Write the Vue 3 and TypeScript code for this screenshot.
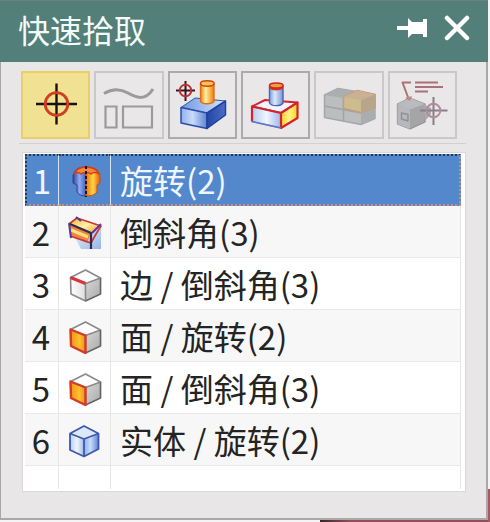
<script setup lang="ts">
import { ref } from 'vue'

type Kind = 'revolve' | 'chamfer' | 'edge' | 'face' | 'body'

interface Pick {
  id: number
  kind: Kind
  label: string
}

const picks: Pick[] = [
  { id: 1, kind: 'revolve', label: '旋转(2)' },
  { id: 2, kind: 'chamfer', label: '倒斜角(3)' },
  { id: 3, kind: 'edge', label: '边 / 倒斜角(3)' },
  { id: 4, kind: 'face', label: '面 / 旋转(2)' },
  { id: 5, kind: 'face', label: '面 / 倒斜角(3)' },
  { id: 6, kind: 'body', label: '实体 / 旋转(2)' },
]

const selected = ref(1)
</script>

<template>
  <div class="desktop">
    <main class="window">
      <header class="titlebar">
        <h1>快速拾取</h1>
        <button class="caption" type="button" aria-label="固定">
          <svg width="32" height="24" viewBox="0 0 32 24">
            <path d="M1 10h11V2l4 4h11V3h4v18h-4v-3H16l-4 4v-8H1z" fill="#fff" />
          </svg>
        </button>
        <button class="caption" type="button" aria-label="关闭">
          <svg width="26" height="26" viewBox="0 0 26 26">
            <path d="M3 3l20 20M23 3L3 23" fill="none" stroke="#fff" stroke-width="4.500" stroke-linecap="round" />
          </svg>
        </button>
      </header>

      <svg class="defs" width="0" height="0" aria-hidden="true">
        <defs>
          <linearGradient id="blueFront"><stop offset="0" stop-color="#8fb0ea" /><stop offset=".45" stop-color="#c9dcfa" /><stop offset="1" stop-color="#5d82d2" /></linearGradient>
          <linearGradient id="blueTop"><stop offset="0" stop-color="#6f97e2" /><stop offset="1" stop-color="#d5e5fc" /></linearGradient>
          <linearGradient id="blueSide"><stop offset="0" stop-color="#2447a4" /><stop offset="1" stop-color="#4a6cc6" /></linearGradient>
          <linearGradient id="orangeRod"><stop offset="0" stop-color="#ef7a12" /><stop offset=".38" stop-color="#fff3a0" /><stop offset="1" stop-color="#f07a08" /></linearGradient>
          <linearGradient id="blueRod"><stop offset="0" stop-color="#7e9fe0" /><stop offset=".4" stop-color="#dce8fb" /><stop offset="1" stop-color="#7794d6" /></linearGradient>
          <linearGradient id="paleFront"><stop offset="0" stop-color="#b5ccf3" /><stop offset=".5" stop-color="#f0f5ff" /><stop offset="1" stop-color="#9db8ec" /></linearGradient>
          <linearGradient id="yellowSide"><stop offset="0" stop-color="#ffcf28" /><stop offset=".5" stop-color="#fff58a" /><stop offset="1" stop-color="#ffd21c" /></linearGradient>
          <linearGradient id="graySide" x2="1" y2="1"><stop offset="0" stop-color="#d8d8d8" /><stop offset="1" stop-color="#a9a9a9" /></linearGradient>
          <linearGradient id="grayFront"><stop offset="0" stop-color="#ffffff" /><stop offset="1" stop-color="#dedede" /></linearGradient>
          <linearGradient id="orangeFace"><stop offset="0" stop-color="#f39216" /><stop offset=".6" stop-color="#ffc12c" /><stop offset="1" stop-color="#f28c18" /></linearGradient>
          <linearGradient id="vaseWarm"><stop offset="0" stop-color="#ee7310" /><stop offset=".5" stop-color="#ffd544" /><stop offset="1" stop-color="#e35c0c" /></linearGradient>
          <linearGradient id="vaseCool"><stop offset="0" stop-color="#2c45a6" /><stop offset=".5" stop-color="#91a9ee" /><stop offset="1" stop-color="#4260be" /></linearGradient>
          <linearGradient id="chamferFill" x2="1" y2="1"><stop offset="0" stop-color="#f9b52d" /><stop offset=".5" stop-color="#fff0a6" /><stop offset="1" stop-color="#f48d22" /></linearGradient>
          <linearGradient id="haze" x2="1" y2="1"><stop offset="0" stop-color="#f4f8ff" /><stop offset="1" stop-color="#94b6e6" /></linearGradient>
        </defs>
      </svg>

      <nav class="toolbar" aria-label="拾取过滤">
        <button class="tool active" type="button" aria-label="点" aria-pressed="true">
          <svg width="67" height="66" viewBox="0 0 67 66" fill="none">
            <path d="M14 32h41M34.500 11.500v41" stroke="#17120c" stroke-width="2.400" />
            <circle cx="34.500" cy="32" r="11.300" stroke="#d23c22" stroke-width="2.800" />
          </svg>
        </button>
        <button class="tool faded" type="button" aria-label="草图">
          <svg width="67" height="66" viewBox="0 0 67 66" fill="none" stroke="#9c9a9b" stroke-width="2.200">
            <path d="M8 21.500C17 16 25 17 32 21s17 9 25-4" stroke-width="3" />
            <path d="M9.500 34.500h11v21h-11zM27 34.500h29v21H27z" />
          </svg>
        </button>
        <button class="tool" type="button" aria-label="特征">
          <svg width="67" height="66" viewBox="0 0 67 66" fill="none" stroke-linejoin="round">
            <path d="M12 35.500L26 26l30.500 3-18.500 12z" fill="url(#blueTop)" stroke="#3154b4" />
            <path d="M12 35.500L38 41v15.500L12 51z" fill="url(#blueFront)" stroke="#2b4cae" stroke-width="1.500" />
            <path d="M38 41l18.500-12v14L38 56.500z" fill="url(#blueSide)" stroke="#20409c" stroke-width="1.500" />
            <path d="M31.500 11.500v18c2 3 11 3 13.500 0v-18" fill="url(#orangeRod)" stroke="#e06a16" stroke-width="1.300" />
            <ellipse cx="38.300" cy="11.500" rx="6.800" ry="2.700" fill="#ffc84c" stroke="#d3431b" stroke-width="1.500" />
            <path d="M7 18.500h19M16.500 9v20" stroke="#35151b" stroke-width="2" />
            <circle cx="16.500" cy="18.500" r="5.800" stroke="#b93339" stroke-width="2" />
          </svg>
        </button>
        <button class="tool" type="button" aria-label="面">
          <svg width="67" height="66" viewBox="0 0 67 66" fill="none" stroke-linejoin="round">
            <path d="M10 34.500L23 28l32.500 2.500L39 41z" fill="#f2f3fb" stroke="#d5232d" stroke-width="2" />
            <path d="M10 34.500L39 41v15L10 49.500z" fill="url(#paleFront)" stroke="#7d91cf" stroke-width="1.500" />
            <path d="M39 41l16.500-10.500v15.500L39 56z" fill="url(#yellowSide)" />
            <path d="M10 49.500v-15L39 41v15l16.500-10V30.500L39 41" stroke="#d5232d" stroke-width="2.200" />
            <path d="M27.500 14v17c2 3.500 11 3.500 13.500 0V14" fill="url(#blueRod)" stroke="#4764b5" stroke-width="1.400" />
            <path d="M27.500 13.500v3c2 2.500 11 2.500 13.500 0v-3" fill="#d5321c" />
            <ellipse cx="34.300" cy="13.500" rx="6.800" ry="2.500" fill="#f39b47" stroke="#cc2619" stroke-width="1.500" />
            <path d="M10 49.500L39 56" stroke="#5f78c6" stroke-width="1.600" />
          </svg>
        </button>
        <button class="tool faded" type="button" aria-label="零件">
          <svg width="67" height="66" viewBox="0 0 67 66" fill="none" stroke-linejoin="round">
            <path d="M8.500 23L22 16.500 59 22.500v24l-14 6-36.500-7z" fill="#bcbdbe" stroke="#a5a8aa" stroke-width="1.500" />
            <path d="M8.500 23L22 16.500l20 3L27.500 26z" fill="#aaaeb0" />
            <path d="M45 40l14-4v10.500l-14 6z" fill="#a9adae" />
            <path d="M8.500 34L45 41M27.500 27v22" stroke="#9fa4a6" stroke-width="1.500" />
            <path d="M27.500 25L41.500 18.500 59 22.500V36l-14 4.500-17.500-4z" fill="#cbbd8d" stroke="#c59c86" stroke-width="1.500" />
            <path d="M27.500 25L45 28l14-5.500L41.500 18.500z" fill="#c9b191" />
            <path d="M45 28l14-5.500V36l-14 4.500z" fill="#b9a58c" />
          </svg>
        </button>
        <button class="tool faded" type="button" aria-label="标注">
          <svg width="67" height="66" viewBox="0 0 67 66" fill="none" stroke-linejoin="round">
            <path d="M8.500 32L21 26l15 6v18l-15 7-12.500-5z" fill="#a5a5a8" stroke="#919397" stroke-width="1.300" />
            <path d="M8.500 32L21 37.500V57L8.500 52z" fill="#b7b8bb" />
            <path d="M8.500 32L21 26l15 6-15 5.500z" fill="#babbbd" />
            <path d="M12.500 41l6.500 1.500V49l-6.500-2z" stroke="#8e9197" stroke-width="1.500" />
            <path d="M34 32l8 4v6l-6 7z" fill="#a9aaae" />
            <path d="M22 10.500h-8.500l6 16M26 10.500h23M26 15h28M26 19.500h13" stroke="#aa7178" stroke-width="2" />
            <path d="M16 26l7-2-2 5z" fill="#b98a86" />
            <path d="M31 38.500h27.500M44.500 25v28" stroke="#85808a" stroke-width="2" />
            <circle cx="44.500" cy="38.500" r="6.800" stroke="#b58c94" stroke-width="2" />
          </svg>
        </button>
      </nav>

      <section class="list">
        <table>
          <colgroup>
            <col class="col-number" />
            <col class="col-icon" />
            <col />
          </colgroup>
          <tbody>
            <tr
              v-for="pick in picks"
              :key="pick.id"
              :class="{ selected: pick.id === selected }"
              @click="selected = pick.id"
            >
              <td class="number">{{ pick.id }}</td>
              <td class="icon">
                <svg v-if="pick.kind === 'revolve'" width="36" height="36" viewBox="0 0 36 36" stroke-linejoin="round">
                  <path d="M19 5c-5 0-9 1-11 4l-2 4v8l4 2v7c2 3 5 4 9 4z" fill="url(#vaseCool)" stroke="#34418d" />
                  <path d="M19 5c5 0 9 1 12 4l2 4v8l-3 2v7c-2 3-6 4-11 4z" fill="url(#vaseWarm)" stroke="#c95012" />
                  <path d="M7 12c2-5 6-7 12-7s11 2 13 7c-3-2-6-2-8 0-2-2-8-2-10 0-2-2-5-2-7 0z" fill="#ef8a35" stroke="#d63b20" stroke-width="1.500" />
                  <path d="M19 4v31" stroke="#25150f" stroke-width="2" stroke-dasharray="3 2" />
                </svg>
                <svg v-else-if="pick.kind === 'chamfer'" width="36" height="36" viewBox="0 0 36 36" fill="none" stroke-linejoin="round">
                  <path d="M6 20l17-1 11-7v23H14z" fill="url(#haze)" />
                  <path d="M2 10l8-6 24 8-9 8z" fill="url(#chamferFill)" />
                  <path d="M2 10l22 9-4 10L3 22z" fill="#f0843c" />
                  <path d="M4 16l17 7" stroke="#ffdf84" stroke-width="3" />
                  <path d="M2 10l8-6 24 8-5 8-5 9-21-7" stroke="#cc3439" stroke-width="1.700" />
                  <path d="M2 9l2 15M9 3l5 4M34 10l-9 9" stroke="#563a9f" stroke-width="2" />
                  <path d="M3 10l21 9v16" stroke="#2e2c52" stroke-width="2.200" />
                </svg>
                <svg v-else width="36" height="36" viewBox="0 0 36 36" fill="none" stroke-linejoin="round">
                  <template v-if="pick.kind === 'body'">
                    <path d="M3 11.500L17 4l14.500 7.500L17 17z" fill="#dce9fc" />
                    <path d="M3 11.500L17 17v17.500L3 28z" fill="url(#paleFront)" />
                    <path d="M17 17l14.500-5.500V27L17 34.500z" fill="url(#blueFront)" />
                    <path d="M3 11.500L17 4l14.500 7.500V27L17 34.500 3 28zl14 5.500 14.500-5.500M17 17v17.500" stroke="#3f58aa" stroke-width="1.800" />
                  </template>
                  <template v-else>
                    <path d="M3.500 11.500L18.500 4l15 8-15 5.500z" fill="#fdfdfd" />
                    <path d="M18.500 17.500l15-5.500v16l-15 7z" fill="url(#graySide)" />
                    <path d="M3.500 11.500l15 6V35L4 28z" :fill="pick.kind === 'face' ? 'url(#orangeFace)' : 'url(#grayFront)'" />
                    <path d="M3.500 11.500L18.500 4l15 8v16l-15 7L4 28zl15 6 15-5.500M18.500 17.500V35" stroke="#8a8a8a" stroke-width="1.600" />
                    <path d="M33.500 12v16l-15 7" stroke="#626262" stroke-width="1.300" />
                    <path v-if="pick.kind === 'edge'" d="M3.500 11.500l15 6" stroke="#d8343a" stroke-width="3" />
                    <path v-else d="M3.500 11.500l15 6V35L4 28z" stroke="#d63c28" stroke-width="2.400" />
                  </template>
                </svg>
              </td>
              <td class="name">{{ pick.label }}</td>
            </tr>
            <tr class="blank">
              <td></td>
              <td></td>
              <td></td>
            </tr>
          </tbody>
        </table>
      </section>
    </main>
  </div>
</template>

<style>
body {
  margin: 0;
}
</style>

<style scoped>
.desktop {
  box-sizing: border-box;
  min-height: 100vh;
  padding: 0 2px 2px 0;
  display: flex;
  font-family: "Noto Sans CJK SC", sans-serif;
  background:
    linear-gradient(#a85860, #a85860) right bottom / 2px 33px no-repeat,
    linear-gradient(90deg, #3c2429, #90505a 30px, #90505a) right bottom / 170px 2px no-repeat,
    #f4f4f4;
}

.window {
  box-sizing: border-box;
  flex: 1;
  min-width: 0;
  display: flex;
  flex-direction: column;
  background: #e8e6e7;
  border: solid #a9a8a8;
  border-width: 0 2px 2px 1px;
}

.titlebar {
  height: 62px;
  margin: 0 -2px 0 -1px;
  box-sizing: border-box;
  padding: 0 18px 8px 18px;
  display: flex;
  align-items: center;
  gap: 16px;
  background: #527f79;
  border-top: 1px solid #6f7f7b;
}

h1 {
  flex: 1;
  margin: 0;
  padding-top: 2px;
  font-size: 32px;
  line-height: 48px;
  font-weight: 400;
  color: #f3fbf8;
}

.caption {
  display: flex;
  padding: 0;
  border: 0;
  background: none;
}

.defs {
  position: absolute;
}

.toolbar {
  display: grid;
  grid-template-columns: repeat(6, minmax(0, 1fr));
  gap: 4px;
  margin: 0 20px 0 18px;
  padding: 9px 9px 4px 2px;
  border-bottom: 1px solid #d4cfd0;
}

.tool {
  display: flex;
  justify-content: center;
  align-items: center;
  height: 68px;
  padding: 0;
  border: 2px solid #acabab;
  background: #e9e7e8;
}

.tool svg {
  flex: none;
}

.tool.faded {
  border-color: #cac9ca;
}

.tool.active {
  border-color: #e8cf69;
  background: #f0e292;
}

.list {
  margin: 8px 20px 26px 21px;
  padding: 1px 4px 2px 2px;
  flex: 1;
  display: flex;
  background: #fff;
  border: 1px solid #dad8d8;
}

table {
  width: 100%;
  height: 100%;
  table-layout: fixed;
  border-collapse: separate;
  border-spacing: 0;
}

.col-number {
  width: 34px;
}

.col-icon {
  width: 52px;
}

td {
  box-sizing: border-box;
  height: 52px;
  padding: 0;
  border-right: 1px solid #e6e6e6;
  border-bottom: 1px solid #e9e9e9;
  font-size: 33px;
  line-height: 48px;
  color: #242424;
  vertical-align: middle;
}

tr:nth-child(even) td {
  background: #f7f7f7;
}

tr.selected td {
  color: #f0f6ff;
  background: #5488cc;
  border-top: 2px dotted #203c58;
  border-bottom: 2px dotted #c98e78;
  border-right-color: #d7e4f5;
}

tr.selected td:first-child {
  border-left: 2px dotted #203c58;
}

tr.selected td:last-child {
  border-right: 2px dotted #c98e78;
}

.number {
  padding-right: 1px;
  text-align: center;
}

.icon svg {
  display: block;
  margin: 0 auto;
}

.name {
  padding-left: 9px;
  white-space: nowrap;
}

tr.blank td {
  height: auto;
  border-bottom: 0;
}
</style>
